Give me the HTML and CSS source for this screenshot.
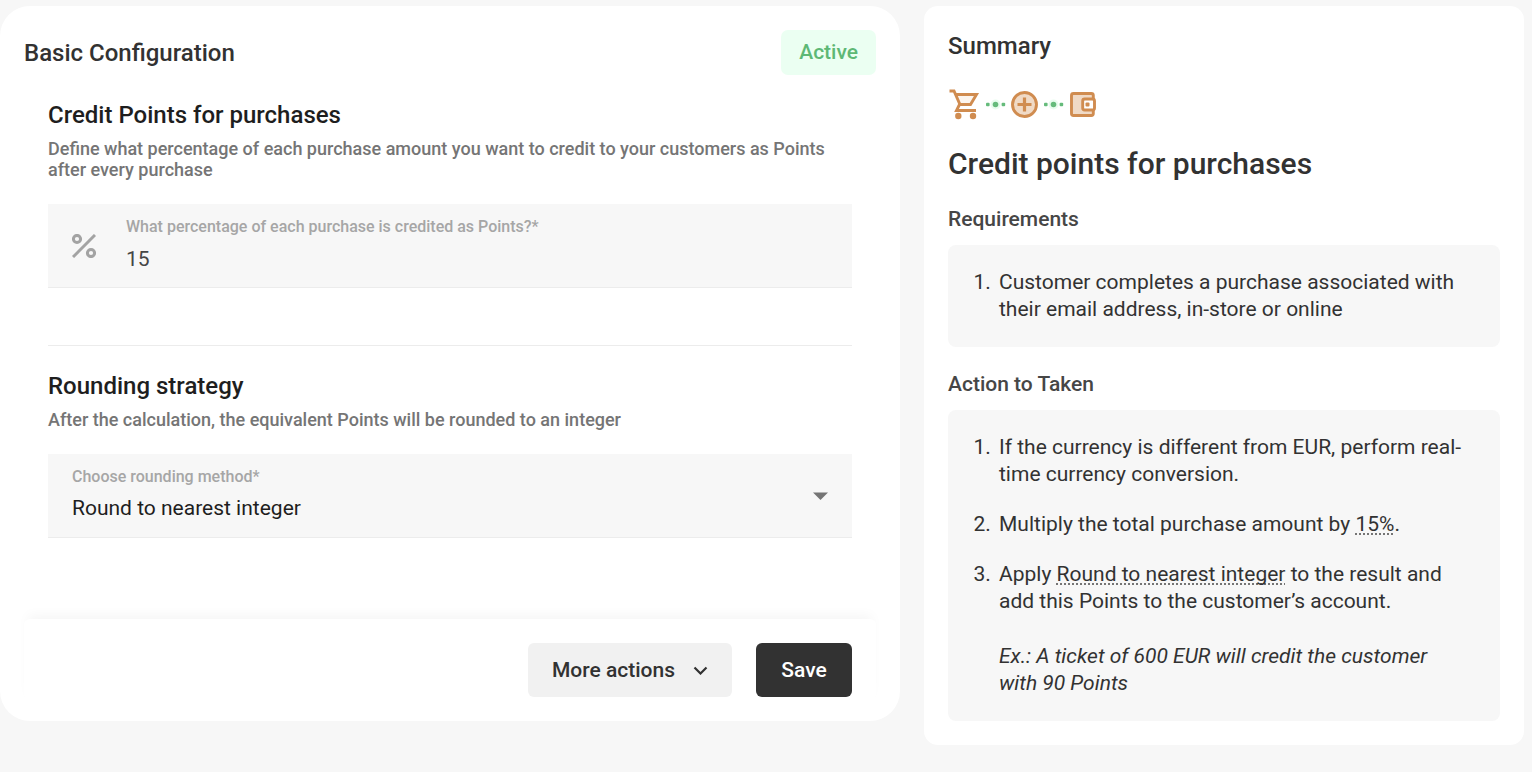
FILE: index.html
```
<!DOCTYPE html>
<html lang="en">
<head>
    <meta charset="UTF-8">
    <meta name="viewport" content="width=device-width, initial-scale=1.0">
    <title>Credit Points for purchases</title>
    <link rel="stylesheet" href="styles.css">
</head>
<body>
    <main class="page">
        <form class="card config">
            <div class="config-header">
                <h2 class="card-title">Basic Configuration</h2>
                <span class="status">Active</span>
            </div>

            <section class="section">
                <h3 class="section-title">Credit Points for purchases</h3>
                <p class="section-text">Define what percentage of each purchase amount you want to credit to your customers as Points after every purchase</p>
                <div class="field">
                    <svg class="field-icon" width="24" height="24" viewBox="0 0 24 24" fill="none" stroke="currentColor" stroke-width="3">
                        <circle cx="5" cy="5" r="3.6"></circle>
                        <circle cx="19" cy="19" r="3.6"></circle>
                        <line x1="1" y1="23" x2="23" y2="1"></line>
                    </svg>
                    <div class="field-body">
                        <label class="field-label" for="percentage">What percentage of each purchase is credited as Points?*</label>
                        <input class="field-control" type="text" inputmode="numeric" id="percentage" value="15">
                    </div>
                </div>
            </section>

            <section class="section">
                <h3 class="section-title">Rounding strategy</h3>
                <p class="section-text">After the calculation, the equivalent Points will be rounded to an integer</p>
                <div class="field">
                    <div class="field-body">
                        <label class="field-label" for="rounding">Choose rounding method*</label>
                        <select class="field-control field-select" id="rounding">
                            <option>Round to nearest integer</option>
                        </select>
                    </div>
                    <svg class="field-arrow" width="15" height="8" viewBox="0 0 15 8" fill="currentColor">
                        <path d="M0 0.500h15L7.500 8z"></path>
                    </svg>
                </div>
            </section>

            <div class="config-footer">
                <button class="btn btn-light" type="button">
                    More actions
                    <svg width="15" height="9" viewBox="0 0 15 9" fill="none" stroke="currentColor" stroke-width="2.200">
                        <path d="M1.500 1.500l6 6 6-6"></path>
                    </svg>
                </button>
                <button class="btn btn-dark" type="submit">Save</button>
            </div>
        </form>

        <aside class="card summary">
            <h2 class="card-title">Summary</h2>
            <div class="flow">
                <svg width="32" height="32" viewBox="0 0 32 32" fill="none" stroke="#d08c50" stroke-width="2.900">
                    <path d="M8 7h20l-5 10H11z" fill="#fcf5ee" stroke="none"></path>
                    <path d="M1.500 3h4.500l6 13.500h10.500L28.500 6.500H8"></path>
                    <path d="M11.500 16.500L8.500 22.500h19.500"></path>
                    <circle cx="10.300" cy="28" r="3.200" fill="#d08c50" stroke="none"></circle>
                    <circle cx="25" cy="28" r="3.200" fill="#d08c50" stroke="none"></circle>
                </svg>
                <svg width="24" height="16" viewBox="0 0 24 16" fill="#65bb7b">
                    <circle cx="13.500" cy="8.500" r="5" fill="#e8fcee"></circle>
                    <rect x="4" y="6.700" width="3.600" height="3.600" rx="1"></rect>
                    <circle cx="13.500" cy="8.500" r="2.800"></circle>
                    <rect x="19.600" y="6.700" width="3.600" height="3.600" rx="1"></rect>
                </svg>
                <svg width="32" height="32" viewBox="0 0 32 32" fill="none" stroke="#d08c50" stroke-width="2.900">
                    <circle cx="16.500" cy="16.500" r="12" fill="#f0dac6"></circle>
                    <path d="M16.500 9.500v14M9.500 16.500h14" stroke-width="3.200"></path>
                </svg>
                <svg width="24" height="16" viewBox="0 0 24 16" fill="#65bb7b">
                    <circle cx="11.500" cy="8.500" r="5" fill="#e8fcee"></circle>
                    <rect x="2" y="6.700" width="3.600" height="3.600" rx="1"></rect>
                    <circle cx="11.500" cy="8.500" r="2.800"></circle>
                    <rect x="17.600" y="6.700" width="3.600" height="3.600" rx="1"></rect>
                </svg>
                <svg width="32" height="32" viewBox="0 0 32 32" fill="none" stroke="#d08c50" stroke-width="2.900">
                    <rect x="3.500" y="5.500" width="21.800" height="22" rx="2" fill="#f0dac6"></rect>
                    <rect x="14.700" y="11" width="11.800" height="11" rx="2" fill="#fff"></rect>
                    <rect x="17.500" y="14.500" width="4" height="4" rx="1" fill="#d08c50" stroke="none"></rect>
                </svg>
            </div>
            <h1 class="summary-title">Credit points for purchases</h1>

            <h4 class="summary-label">Requirements</h4>
            <ol class="steps">
                <li>Customer completes a purchase associated with their email address, in-store or online</li>
            </ol>

            <h4 class="summary-label">Action to Taken</h4>
            <ol class="steps">
                <li>If the currency is different from EUR, perform real-time currency conversion.</li>
                <li>Multiply the total purchase amount by <span class="value">15%</span>.</li>
                <li>
                    Apply <span class="value">Round to nearest integer</span> to the result and add this Points to the customer’s account.
                    <p class="example">Ex.: A ticket of 600 EUR will credit the customer with 90 Points</p>
                </li>
            </ol>
        </aside>
    </main>
</body>
</html>
```

FILE: styles.css
```
* {
    margin: 0;
    padding: 0;
    box-sizing: border-box;
}

body {
    font-family: Roboto, "Liberation Sans", sans-serif;
    font-size: 21px;
    line-height: 27px;
    color: #323232;
    background-color: #f7f7f7;
}

.page {
    display: grid;
    grid-template-columns: 3fr 2fr;
    align-items: start;
    gap: 24px;
    padding: 6px 8px 24px 0;
}

@media (max-width: 1000px) {
    .page {
        grid-template-columns: 1fr;
    }
}

.card {
    background-color: #fff;
    padding: 24px;
}

.config {
    border-radius: 30px;
    padding-bottom: 0;
}

.summary {
    border-radius: 14px;
}

.card-title {
    font-size: 24px;
    line-height: 32px;
    font-weight: 500;
}

.config-header {
    display: flex;
    justify-content: space-between;
    align-items: center;
}

.status {
    padding: 9px 18px;
    border-radius: 7px;
    font-weight: 500;
    color: #5db875;
    background-color: #ebfff2;
}

.section {
    margin: 0 24px;
    padding: 25px 0 57px;
}

.section + .section {
    border-top: 1px solid #ececec;
}

.section-title {
    font-size: 24px;
    line-height: 30px;
    font-weight: 500;
    color: #1e1e1e;
    margin-bottom: 8px;
}

.section-text {
    font-size: 18px;
    line-height: 21px;
    font-weight: 500;
    color: #757575;
    margin-bottom: 24px;
}

.field {
    display: flex;
    align-items: center;
    gap: 30px;
    height: 84px;
    padding: 0 24px;
    background-color: #f7f7f7;
    border-bottom: 1px solid #ececec;
    position: relative;
}

.field-icon {
    color: #a3a3a3;
}

.field-body {
    flex: 1;
    padding-top: 2px;
}

.field-label {
    display: block;
    font-size: 16px;
    line-height: 24px;
    font-weight: 500;
    color: #a6a6a6;
}

.field-control {
    display: block;
    width: 100%;
    height: 40px;
    border: none;
    outline: none;
    background: transparent;
    font: inherit;
    color: #464646;
}

.field-select {
    appearance: none;
    color: #1e1e1e;
}

.field-arrow {
    position: absolute;
    right: 24px;
    color: #757575;
    pointer-events: none;
}

.config-footer {
    display: flex;
    justify-content: flex-end;
    gap: 24px;
    margin-top: 24px;
    padding: 24px;
    border-radius: 6px 6px 30px 30px;
    background: #fff;
    box-shadow: 0 -8px 12px -4px rgba(0, 0, 0, 0.04);
}

.btn {
    display: flex;
    align-items: center;
    justify-content: center;
    gap: 18px;
    min-width: 96px;
    height: 54px;
    padding: 0 24px;
    border: none;
    border-radius: 6px;
    font: inherit;
    font-weight: 500;
    cursor: pointer;
}

.btn-light {
    color: #323232;
    background-color: #f1f1f1;
}

.btn-dark {
    color: #fff;
    background-color: #323232;
}

.flow {
    display: flex;
    align-items: center;
    gap: 2px;
    margin: 26px 0 24px;
}

.summary-title {
    font-size: 30px;
    line-height: 40px;
    font-weight: 500;
    margin-bottom: 22px;
}

.summary-label {
    font-size: 21px;
    font-weight: 500;
    color: #464646;
    margin-bottom: 12px;
}

.steps {
    padding: 24px 36px 24px 48px;
    border-radius: 8px;
    background-color: #f7f7f7;
}

.steps + .summary-label {
    margin-top: 24px;
}

.steps li {
    padding-left: 3px;
}

.steps li + li {
    margin-top: 23px;
}

.value {
    text-decoration: underline dotted 2px #757575;
    text-underline-offset: 2px;
    text-decoration-skip-ink: none;
}

.example {
    margin-top: 28px;
    font-style: italic;
}
```
